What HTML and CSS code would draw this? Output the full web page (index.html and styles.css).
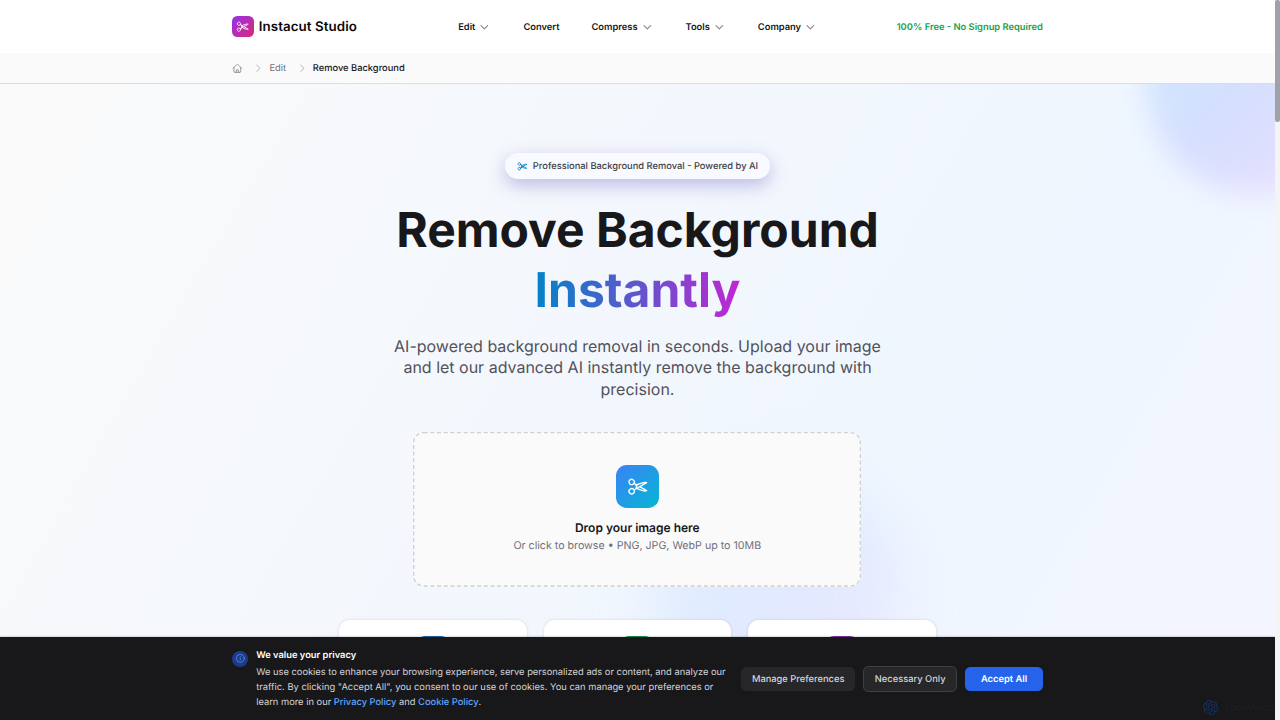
FILE: index.html
```html
<!DOCTYPE html>
<html lang="en">
<head>
<meta charset="utf-8">
<title>Remove Background - Instacut Studio</title>
<link rel="stylesheet" href="styles.css">
</head>
<body>
<svg class="defs" width="0" height="0" aria-hidden="true">
  <symbol id="scissors" viewBox="0 0 24 24"><path d="m7.848 8.25 1.536.887M7.848 8.25a3 3 0 1 1-5.196-3 3 3 0 0 1 5.196 3Zm1.536.887a2.165 2.165 0 0 1 1.083 1.839c.005.351.054.695.14 1.024M9.384 9.137l2.077 1.199M7.848 15.75l1.536-.887m-1.536.887a3 3 0 1 1-5.196 3 3 3 0 0 1 5.196-3Zm1.536-.887a2.165 2.165 0 0 0 1.083-1.838c.005-.352.054-.695.14-1.025m-1.223 2.863 2.077-1.199m0-3.328a4.323 4.323 0 0 1 2.068-1.379l5.325-1.628a4.5 4.5 0 0 1 2.48-.044l.803.215-7.794 4.5m-2.882-1.664A4.33 4.33 0 0 0 10.607 12m3.736 0 7.794 4.5-.802.215a4.5 4.5 0 0 1-2.48-.043l-5.326-1.629a4.324 4.324 0 0 1-2.068-1.379M14.343 12l-2.882 1.664"/></symbol>
  <symbol id="down" viewBox="0 0 24 24"><path d="m19.5 8.25-7.5 7.5-7.5-7.5"/></symbol>
  <symbol id="right" viewBox="0 0 24 24"><path d="m8.25 4.5 7.5 7.5-7.5 7.5"/></symbol>
</svg>
<div class="app">
  <div class="page">
    <header class="header">
      <div class="container bar">
        <div class="brand"><span class="logo"><svg class="icon"><use href="#scissors"/></svg></span><span class="brand-name">Instacut Studio</span></div>
        <nav class="nav">
          <a class="nav-item">Edit<svg class="icon chev"><use href="#down"/></svg></a>
          <a class="nav-item">Convert</a>
          <a class="nav-item">Compress<svg class="icon chev"><use href="#down"/></svg></a>
          <a class="nav-item">Tools<svg class="icon chev"><use href="#down"/></svg></a>
          <a class="nav-item">Company<svg class="icon chev"><use href="#down"/></svg></a>
        </nav>
        <div class="free">100% Free - No Signup Required</div>
      </div>
    </header>
    <div class="crumbs">
      <div class="container crumb-row">
        <svg class="icon home" viewBox="0 0 24 24"><path d="m2.25 12 8.954-8.955c.44-.439 1.152-.439 1.591 0L21.75 12M4.5 9.75v10.125c0 .621.504 1.125 1.125 1.125H9.75v-4.875c0-.621.504-1.125 1.125-1.125h2.25c.621 0 1.125.504 1.125 1.125V21h4.125c.621 0 1.125-.504 1.125-1.125V9.75M8.25 21h8.25"/></svg>
        <svg class="icon sep"><use href="#right"/></svg>
        <span class="crumb">Edit</span>
        <svg class="icon sep"><use href="#right"/></svg>
        <span class="crumb current">Remove Background</span>
      </div>
    </div>
    <main class="hero">
      <div class="blob blob-top"></div>
      <div class="blob blob-bottom"></div>
      <div class="hero-body">
        <div class="pill"><svg class="icon"><use href="#scissors"/></svg>Professional Background Removal - Powered by AI</div>
        <h1 class="title">Remove Background<br><span class="accent">Instantly</span></h1>
        <p class="lead">AI-powered background removal in seconds. Upload your image<br>and let our advanced AI instantly remove the background with<br>precision.</p>
        <div class="drop">
          <svg class="outline" viewBox="0 0 448 154.67"><rect x=".67" y=".67" width="446.67" height="153.33" rx="10"/></svg>
          <span class="drop-icon"><svg class="icon"><use href="#scissors"/></svg></span>
          <div class="drop-title">Drop your image here</div>
          <div class="drop-hint">Or click to browse • PNG, JPG, WebP up to 10MB</div>
        </div>
        <div class="cards">
          <div class="card"><span class="badge blue"></span></div>
          <div class="card"><span class="badge green"></span></div>
          <div class="card"><span class="badge purple"></span></div>
        </div>
      </div>
    </main>
    <section class="cookie">
      <div class="container cookie-row">
        <span class="info"><svg class="icon" viewBox="0 0 24 24"><path d="m11.25 11.25.041-.02a.75.75 0 0 1 1.063.852l-.708 2.836a.75.75 0 0 0 1.063.853l.041-.021M21 12a9 9 0 1 1-18 0 9 9 0 0 1 18 0Zm-9-3.75h.008v.008H12V8.25Z"/></svg></span>
        <div class="cookie-text">
          <div class="cookie-title">We value your privacy</div>
          <p class="cookie-copy">We use cookies to enhance your browsing experience, serve personalized ads or content, and analyze our<br>traffic. By clicking "Accept All", you consent to our use of cookies. You can manage your preferences or<br>learn more in our <a class="link">Privacy Policy</a> and <a class="link">Cookie Policy</a>.</p>
        </div>
        <div class="actions">
          <button class="btn">Manage Preferences</button>
          <button class="btn outlined">Necessary Only</button>
          <button class="btn primary">Accept All</button>
        </div>
      </div>
      <div class="mark"><svg class="knot" viewBox="0 0 24 24"><path d="M22.2819 9.8211a5.9847 5.9847 0 0 0-.5157-4.9108 6.0462 6.0462 0 0 0-6.5098-2.9A6.0651 6.0651 0 0 0 4.9807 4.1818a5.9847 5.9847 0 0 0-3.9977 2.9 6.0462 6.0462 0 0 0 .7427 7.0966 5.98 5.98 0 0 0 .511 4.9107 6.051 6.051 0 0 0 6.5146 2.9001A5.9847 5.9847 0 0 0 13.2599 24a6.0557 6.0557 0 0 0 5.7718-4.2058 5.9894 5.9894 0 0 0 3.9977-2.9001 6.0557 6.0557 0 0 0-.7475-7.073zm-9.022 12.6081a4.4755 4.4755 0 0 1-2.8764-1.0408l.1419-.0804 4.7783-2.7582a.7948.7948 0 0 0 .3927-.6813v-6.7369l2.02 1.1686a.071.071 0 0 1 .038.052v5.5826a4.504 4.504 0 0 1-4.4945 4.4944zm-9.6607-4.1254a4.4708 4.4708 0 0 1-.5346-3.0137l.142.0852 4.783 2.7582a.7712.7712 0 0 0 .7806 0l5.8428-3.3685v2.3324a.0804.0804 0 0 1-.0332.0615L9.74 19.9502a4.4992 4.4992 0 0 1-6.1408-1.6464zM2.3408 7.8956a4.485 4.485 0 0 1 2.3655-1.9728V11.6a.7664.7664 0 0 0 .3879.6765l5.8144 3.3543-2.0201 1.1685a.0757.0757 0 0 1-.071 0l-4.8303-2.7865A4.504 4.504 0 0 1 2.3408 7.8956zm16.5963 3.8558L13.1038 8.364 15.1192 7.2a.0757.0757 0 0 1 .071 0l4.8303 2.7913a4.4944 4.4944 0 0 1-.6765 8.1042v-5.6772a.79.79 0 0 0-.407-.667zm2.0107-3.0231l-.142-.0852-4.7735-2.7818a.7759.7759 0 0 0-.7854 0L9.409 9.2297V6.8974a.0662.0662 0 0 1 .0284-.0615l4.8303-2.7866a4.4992 4.4992 0 0 1 6.6802 4.66zM8.3065 12.863l-2.02-1.1638a.0804.0804 0 0 1-.038-.0567V6.0742a4.4992 4.4992 0 0 1 7.3757-3.4537l-.142.0805L8.704 5.459a.7948.7948 0 0 0-.3927.6813zm1.0976-2.3654l2.602-1.4998 2.6069 1.4998v2.9994l-2.5974 1.4997-2.6067-1.4997Z"/></svg><span>ToolMage</span></div>
    </section>
  </div>
  <div class="scrollbar"><div class="thumb"></div></div>
</div>
</body>
</html>
```
FILE: styles.css
```css
* { box-sizing: border-box; }
body { margin: 0; font-family: Inter, "Liberation Sans", sans-serif; color: #18181b; overflow: hidden; text-rendering: geometricPrecision; }
.defs { position: absolute; }
.app { display: flex; width: 1280px; height: 720px; overflow: hidden; background: #fff; }
.page { position: relative; width: 1275px; height: 720px; display: flex; flex-direction: column; overflow: hidden; }
.scrollbar { width: 5px; background: #f4f4f5; }
.thumb { height: 122px; border-radius: 2px; background: #a1a1aa; }
.icon { fill: none; stroke: currentColor; stroke-width: 1.5; stroke-linecap: round; stroke-linejoin: round; flex: none; }
.container { width: 810.67px; margin: 0 auto; }

.header { height: 53px; flex: none; background: #fff; }
.bar { height: 53px; display: grid; grid-template-columns: 226px 1fr auto; align-items: center; }
.brand { display: flex; align-items: center; gap: 5.33px; font-size: 13.33px; font-weight: 600; letter-spacing: .07px; color: #09090b; }
.brand-name { padding-top: 2px; }
.logo { width: 21.33px; height: 21.33px; border-radius: 5.33px; display: grid; place-items: center; color: #fff; background: linear-gradient(135deg, #9333ea, #db2777); }
.logo .icon { width: 13.33px; height: 13.33px; }
.nav { display: flex; gap: 32px; padding-top: 1.5px; font-size: 9.33px; font-weight: 600; }
.nav-item { display: flex; align-items: center; gap: 4px; }
.chev { width: 10.67px; height: 10.67px; margin-right: 1.33px; color: #85858e; stroke-width: 2.4; }
.free { padding-top: 1.5px; font-size: 9.33px; font-weight: 600; color: #16a34a; }

.crumbs { height: 31px; flex: none; background: #fafafa; border-bottom: 1px solid #dedee1; }
.crumb-row { height: 30px; display: flex; align-items: center; font-size: 9.33px; font-weight: 500; }
.home { width: 10.67px; height: 10.67px; color: #71717a; }
.sep { width: 10.67px; height: 10.67px; margin-left: 10.67px; margin-right: 5.33px; color: #909098; }
.crumb { color: #71717a; font-weight: 400; }
.crumb.current { color: #18181b; font-weight: 500; }

.hero { position: relative; flex: 1; overflow: hidden; background: linear-gradient(120deg, #fafafa 0%, #eff6ff 60%, #f8f5ff 110%) 0 0 / 1275px 1150px no-repeat; }
.blob { position: absolute; border-radius: 50%; background: linear-gradient(135deg, #bae6fd 0%, #c7d2fe 50%, #e9d5ff 90%); }
.blob-top { width: 226px; height: 226px; left: 1145px; top: -115px; filter: blur(14px); opacity: .65; }
.blob-bottom { width: 256px; height: 256px; left: 648px; top: 386px; filter: blur(28px); opacity: .35; }
.hero-body { position: relative; display: flex; flex-direction: column; align-items: center; padding-top: 69px; }
.pill { display: flex; align-items: center; gap: 5.33px; height: 26px; padding: 0 11.5px; border-radius: 13px; font-size: 9.33px; font-weight: 500; color: #3f3f46; background: #f8faff; box-shadow: 0 6px 18px rgba(79, 70, 180, .34); }
.pill .icon { width: 10.67px; height: 10.67px; color: #0284c7; stroke-width: 1.8; }
.title { margin: 21px 0 0; font-size: 48px; line-height: 60px; font-weight: 700; text-align: center; color: #18181b; }
.accent { display: inline-block; background: linear-gradient(90deg, #0284c7, #c026d3); -webkit-background-clip: text; background-clip: text; color: transparent; }
.lead { margin: 16px 0 0; font-size: 16px; line-height: 21.33px; text-align: center; color: #52525b; }
.drop { position: relative; width: 448px; height: 154.67px; margin-top: 32px; margin-right: .4px; padding-top: 33px; display: flex; flex-direction: column; align-items: center; border-radius: 10.67px; background: #fafafa; }
.outline { position: absolute; inset: 0; width: 448px; height: 154.67px; fill: none; stroke: #d0d0d5; stroke-width: 1.33; stroke-dasharray: 4 2.67; }
.drop-icon { width: 42.67px; height: 42.67px; border-radius: 10.67px; display: grid; place-items: center; color: #fff; background: linear-gradient(135deg, #3b82f6, #06b6d4); }
.drop-icon .icon { width: 21.33px; height: 21.33px; }
.drop-title { margin-top: 11.33px; font-size: 12px; line-height: 18px; font-weight: 600; }
.drop-hint { margin-top: 1px; font-size: 10.67px; line-height: 16px; color: #71717a; }
.cards { display: grid; grid-template-columns: repeat(3, 187.5px); gap: 17px; margin-top: 33px; margin-right: .4px; }
.card { height: 120px; padding-top: 16px; border-radius: 10.67px; background: #fff; box-shadow: 0 0 3px rgba(24, 24, 27, .15); display: flex; justify-content: center; }
.badge { width: 32px; height: 32px; border-radius: 8px; }
.blue { background: #176aa8; }
.green { background: #159455; }
.purple { background: #8134a4; }

.cookie { position: absolute; left: 0; right: 0; bottom: 0; height: 83px; background: #18181b; color: #d4d4d8; box-shadow: 0 0 2px rgba(24, 24, 27, .4); }
.cookie-row { display: flex; align-items: flex-start; padding-top: 10px; }
.info { width: 16px; height: 16px; margin-top: 3.5px; margin-right: 8px; border-radius: 50%; display: grid; place-items: center; background: #1e3a8a; color: #60a5fa; flex: none; }
.info .icon { width: 10.67px; height: 10.67px; }
.cookie-text { flex: 1; padding-top: 1px; white-space: nowrap; }
.cookie-title { font-size: 9.33px; line-height: 15px; font-weight: 600; color: #fff; }
.cookie-copy { margin: 1.5px 0 0; font-size: 9.33px; line-height: 15px; }
.link { color: #60a5fa; font-weight: 500; }
.actions { display: flex; align-items: center; gap: 8px; margin-top: 18.5px; }
.btn { height: 24px; padding: 1px 10.67px 0; border: 0; border-radius: 5.33px; font: 500 9.33px Inter, sans-serif; text-rendering: geometricPrecision; color: #d4d4d8; background: #27272a; white-space: nowrap; }
.btn.outlined { height: 26px; border: 1px solid #3f3f46; }
.btn.primary { padding: 1px 15.7px 0; background: #2563eb; color: #fff; font-weight: 600; }
.mark { position: absolute; right: 0; bottom: 5px; display: flex; align-items: center; gap: 5px; font-size: 10.8px; font-weight: 600; color: #1d1d1f; }
.knot { width: 15px; height: 15px; fill: #18305c; }
```
